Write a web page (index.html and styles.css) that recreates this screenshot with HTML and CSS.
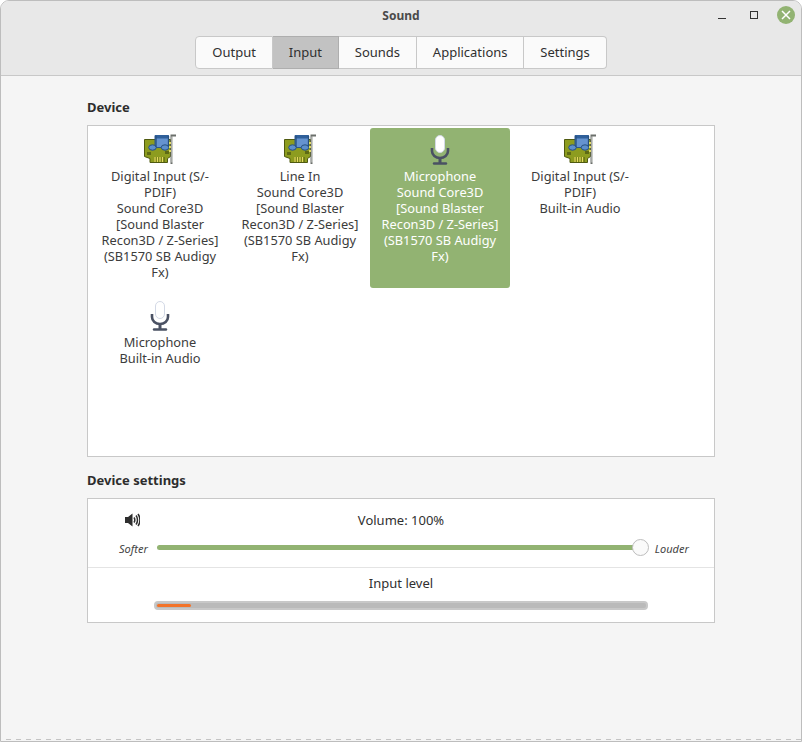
FILE: index.html
```html
<!DOCTYPE html>
<html lang="en">
<head>
  <meta charset="UTF-8">
  <title>Sound</title>
  <link rel="stylesheet" href="styles.css">
</head>
<body>
  <svg class="defs" width="0" height="0">
    <defs>
      <symbol id="card" viewBox="0 0 32 32" overflow="visible">
        <path d="M.5 5.5h26v17l-3 2v4H6v-4l-5.500-2z" fill="#8d9c1f" stroke="#4f5a10"/>
        <path d="M3 18h4v3H3zM21 17h4v3h-4z" fill="#5e6a14"/>
        <path d="M10 23h11v5H10z" fill="#6c7a16"/>
        <path d="M11 23v5M13.5 23v5M16 23v5M18.5 23v5" stroke="#e6dc5e" stroke-width="1.3"/>
        <path d="M11 1.5h13.5v12H11z" fill="#6593cf" stroke="#2b568c"/>
        <path d="M11 1h13.5v3.500H11z" fill="#2f5f9a"/>
        <ellipse cx="8.5" cy="13.5" rx="3.8" ry="2.7" fill="#5c8fca" stroke="#27507f"/>
        <ellipse cx="21" cy="13.5" rx="3.8" ry="2.7" fill="#5c8fca" stroke="#27507f"/>
        <path d="M12 2v11M24.5 2v11" stroke="#27507f" stroke-width="1.3"/>
        <path d="M27.5 30V1.500H32" fill="none" stroke="#6b6f6b" stroke-width="2"/>
        <path d="M28 2.500v26" stroke="#e2e4e0"/>
        <path d="M25 8h2v2h-2zM25 12h2v2h-2zM25 16h2v2h-2z" fill="#e0d868"/>
      </symbol>
      <symbol id="mic" viewBox="0 0 32 32">
        <path d="M8 14v3c0 4 3.500 7 8 7s8-3 8-7v-3" fill="none" stroke="#4a5163" stroke-width="2.6"/>
        <path d="M16 23v6" stroke="#4a5163" stroke-width="3"/>
        <path d="M10 29.5h12" stroke="#4a5163" stroke-width="2.4" stroke-linecap="round"/>
        <rect x="11.5" y="1.5" width="9" height="17" rx="4.5" fill="#fff" stroke="#d3d9e6"/>
      </symbol>
    </defs>
  </svg>

  <div class="window">
    <header class="titlebar">
      <div class="title">Sound</div>
      <div class="controls">
        <span class="minimize"></span>
        <span class="maximize"></span>
        <span class="close">
          <svg width="10" height="10" viewBox="0 0 10 10"><path d="M1 1l8 8M9 1l-8 8" stroke="#fff" stroke-width="1.5"/></svg>
        </span>
      </div>
      <nav class="tabs">
        <a class="tab">Output</a>
        <a class="tab active">Input</a>
        <a class="tab">Sounds</a>
        <a class="tab">Applications</a>
        <a class="tab">Settings</a>
      </nav>
    </header>

    <main class="content">
      <h2>Device</h2>
      <div class="devices">
        <div class="device">
          <svg class="icon"><use href="#card"/></svg>
          <div>Digital Input (S/-<br>PDIF)<br>Sound Core3D<br>[Sound Blaster<br>Recon3D / Z-Series]<br>(SB1570 SB Audigy<br>Fx)</div>
        </div>
        <div class="device">
          <svg class="icon"><use href="#card"/></svg>
          <div>Line In<br>Sound Core3D<br>[Sound Blaster<br>Recon3D / Z-Series]<br>(SB1570 SB Audigy<br>Fx)</div>
        </div>
        <div class="device selected">
          <svg class="icon"><use href="#mic"/></svg>
          <div>Microphone<br>Sound Core3D<br>[Sound Blaster<br>Recon3D / Z-Series]<br>(SB1570 SB Audigy<br>Fx)</div>
        </div>
        <div class="device">
          <svg class="icon"><use href="#card"/></svg>
          <div>Digital Input (S/-<br>PDIF)<br>Built-in Audio</div>
        </div>
        <div class="device">
          <svg class="icon"><use href="#mic"/></svg>
          <div>Microphone<br>Built-in Audio</div>
        </div>
      </div>

      <h2 class="second">Device settings</h2>
      <div class="settings">
        <div class="volume">
          <div class="volume-top">
            <svg class="speaker" width="16" height="16" viewBox="0 0 16 16">
              <path d="M1 5h3l4.500-3.500v13L4 11H1z" fill="#2e2e2e"/>
              <path d="M10 5.5c1 1.500 1 3.500 0 5M12 3.5c2 2.500 2 6.500 0 9M14 2c2.600 3.500 2.600 8.500 0 12" fill="none" stroke="#2e2e2e" stroke-width="1.5"/>
            </svg>
            <span>Volume: 100%</span>
          </div>
          <div class="slider-row">
            <em>Softer</em>
            <div class="slider">
              <div class="track"></div>
              <div class="knob"></div>
            </div>
            <em>Louder</em>
          </div>
        </div>
        <div class="level">
          <div>Input level</div>
          <div class="meter"><div class="meter-fill" style="width: 7%"></div></div>
        </div>
      </div>
    </main>
  </div>
</body>
</html>
```

FILE: styles.css
```css
* { box-sizing: border-box; }
html, body { margin: 0; height: 100%; background: #fff; }
body { font-family: "Noto Sans", sans-serif; font-size: 13px; color: #303030; overflow: hidden; }
.defs { position: absolute; }

.window {
  position: relative;
  height: 742px;
  display: flex;
  flex-direction: column;
  background: #f5f5f5;
  border: 1px solid #bdbdbd;
  border-radius: 9px 9px 0 0;
  overflow: hidden;
}
/* dashed resize edge along the bottom */
.window::after {
  content: "";
  position: absolute;
  left: 5px;
  right: 0;
  top: 738px;
  height: 1px;
  background: repeating-linear-gradient(to right, #c4c4c4 0 5px, transparent 5px 10px);
}

.titlebar {
  position: relative;
  height: 75px;
  flex: none;
  background: #e8e8e8;
  border-bottom: 1px solid #c8c8c8;
  padding-top: 35px;
  display: flex;
  justify-content: center;
}
.title { position: absolute; top: 6px; left: 0; right: 0; text-align: center; font-weight: 700; font-size: 12px; color: #4a4a4a; }

.controls { position: absolute; top: 5px; right: 6px; display: flex; align-items: center; }
.minimize { width: 8px; height: 1px; background: #333; margin-top: 7px; margin-right: 24px; }
.maximize { width: 8px; height: 8px; border: 1px solid #333; margin-top: -1px; margin-right: 19px; }
.close { width: 18px; height: 18px; border-radius: 50%; background: #92b372; display: flex; align-items: center; justify-content: center; }

.tabs { display: flex; height: 33px; }
.tab {
  display: flex;
  align-items: center;
  padding: 0 15.9px 2px;
  background: #fafafa;
  border: 1px solid #c8c8c8;
  border-left: none;
  color: #303030;
}
.tab:first-child { border-left: 1px solid #c8c8c8; border-radius: 4px 0 0 4px; padding: 0 16px 2px; }
.tab:last-child { border-radius: 0 4px 4px 0; }
.tab.active { background: #c2c2c2; border-color: #aeaeae; }

.content { padding: 0 86px; }
h2 { margin: 23px 0 10px; font-size: 13px; line-height: 16px; font-weight: 700; color: #2d2d2d; }
h2.second { margin: 15px 0 10px; }

.devices {
  height: 332px;
  background: #fff;
  border: 1px solid #c8c8c8;
  padding: 2px;
  display: grid;
  grid-template-columns: repeat(4, 140px);
  grid-auto-rows: min-content;
  row-gap: 6px;
}
.device { height: 160px; padding-top: 6px; text-align: center; line-height: 16px; border-radius: 3px; color: #3c3c3c; font-size: 12.8px; }
.device:nth-child(n+5) { height: auto; }
.device .icon { display: block; width: 32px; height: 32px; margin: 0 auto 2px; overflow: visible; }
.device.selected { background: #92b372; color: #fff; }

.settings { background: #fff; border: 1px solid #c8c8c8; height: 125px; }
.volume { height: 69px; border-bottom: 1px solid #e4e4e4; padding-top: 13px; position: relative; }
.volume-top { text-align: center; line-height: 16px; }
.speaker { position: absolute; left: 36px; top: 13px; }
.slider-row { display: flex; align-items: center; margin-top: 9px; padding-left: 31px; height: 20px; }
.slider-row em { font-size: 11px; color: #444; margin-top: 3px; }
.slider { position: relative; width: 492px; height: 18px; margin: 0 6px 0 9px; }
.track { position: absolute; left: 0; right: 8px; top: 7px; height: 5px; border-radius: 3px; background: #92b372; }
.knob { position: absolute; right: 0; top: 1px; width: 17px; height: 17px; border-radius: 50%; background: #fafafa; border: 1px solid #bdbdbd; }

.level { text-align: center; padding-top: 7px; line-height: 16px; }
.meter { width: 494px; height: 9px; margin: 10px 0 0 66px; padding: 1px; background: #bababa; border: 2px solid #c8c8c8; border-radius: 4px; }
.meter-fill { height: 3px; background: #f37329; border-radius: 2px; }
```
